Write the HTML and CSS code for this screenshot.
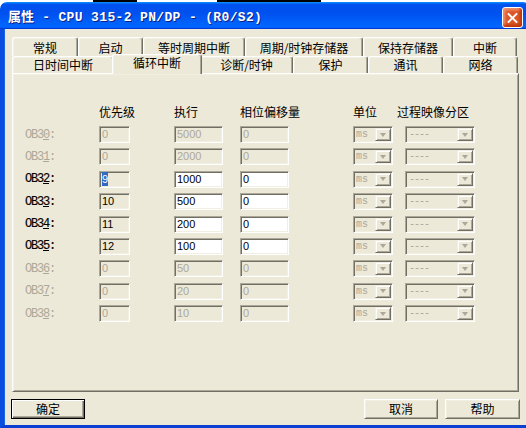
FILE: index.html
```html
<!DOCTYPE html>
<html lang="zh-CN">
<head>
<meta charset="utf-8">
<title>属性 - CPU 315-2 PN/DP - (R0/S2)</title>
<link rel="stylesheet" href="styles.css">
</head>
<body>
<div class="strip"><span class="s1"></span><span class="s2 k"></span><span class="s3"></span><span class="s4 k"></span><span class="s5"></span></div>
<div class="window">
  <div class="titlebar">
    <span class="title"><span class="cjk">属性</span> - CPU 315-2 PN/DP - (R0/S2)</span>
    <div class="closebtn"><span class="x1"></span><span class="x2"></span></div>
  </div>
  <div class="frame">
    <div class="tabs">
      <div class="row row1">
        <div class="tab">常规</div>
        <div class="tab">启动</div>
        <div class="tab">等时周期中断</div>
        <div class="tab">周期/时钟存储器</div>
        <div class="tab">保持存储器</div>
        <div class="tab">中断</div>
      </div>
      <div class="row row2">
        <div class="tab">日时间中断</div>
        <div class="tab sel">循环中断</div>
        <div class="tab">诊断/时钟</div>
        <div class="tab">保护</div>
        <div class="tab">通讯</div>
        <div class="tab">网络</div>
      </div>
    </div>
    <div class="panel">
      <div class="grid head">
        <span></span>
        <span>优先级</span>
        <span>执行</span>
        <span>相位偏移量</span>
        <span>单位</span>
        <span class="parthead">过程映像分区</span>
      </div>
      <div class="rows">
        <div class="grid obrow off">
          <span class="lbl">OB3<u>0</u>:</span>
          <span class="edit p">0</span><span class="edit e">5000</span><span class="edit ph">0</span>
          <span class="combo unit"><span class="txt">ms</span><span class="dd"><i></i></span></span>
          <span class="combo part"><span class="txt">----</span><span class="dd"><i></i></span></span>
        </div>
        <div class="grid obrow off">
          <span class="lbl">OB3<u>1</u>:</span>
          <span class="edit p">0</span><span class="edit e">2000</span><span class="edit ph">0</span>
          <span class="combo unit"><span class="txt">ms</span><span class="dd"><i></i></span></span>
          <span class="combo part"><span class="txt">----</span><span class="dd"><i></i></span></span>
        </div>
        <div class="grid obrow on">
          <span class="lbl">OB3<u>2</u>:</span>
          <span class="edit p"><span class="hl">9</span></span><span class="edit e">1000</span><span class="edit ph">0</span>
          <span class="combo unit"><span class="txt">ms</span><span class="dd"><i></i></span></span>
          <span class="combo part"><span class="txt">----</span><span class="dd"><i></i></span></span>
        </div>
        <div class="grid obrow on">
          <span class="lbl">OB3<u>3</u>:</span>
          <span class="edit p">10</span><span class="edit e">500</span><span class="edit ph">0</span>
          <span class="combo unit"><span class="txt">ms</span><span class="dd"><i></i></span></span>
          <span class="combo part"><span class="txt">----</span><span class="dd"><i></i></span></span>
        </div>
        <div class="grid obrow on">
          <span class="lbl">OB3<u>4</u>:</span>
          <span class="edit p">11</span><span class="edit e">200</span><span class="edit ph">0</span>
          <span class="combo unit"><span class="txt">ms</span><span class="dd"><i></i></span></span>
          <span class="combo part"><span class="txt">----</span><span class="dd"><i></i></span></span>
        </div>
        <div class="grid obrow on">
          <span class="lbl">OB3<u>5</u>:</span>
          <span class="edit p">12</span><span class="edit e">100</span><span class="edit ph">0</span>
          <span class="combo unit"><span class="txt">ms</span><span class="dd"><i></i></span></span>
          <span class="combo part"><span class="txt">----</span><span class="dd"><i></i></span></span>
        </div>
        <div class="grid obrow off">
          <span class="lbl">OB3<u>6</u>:</span>
          <span class="edit p">0</span><span class="edit e">50</span><span class="edit ph">0</span>
          <span class="combo unit"><span class="txt">ms</span><span class="dd"><i></i></span></span>
          <span class="combo part"><span class="txt">----</span><span class="dd"><i></i></span></span>
        </div>
        <div class="grid obrow off">
          <span class="lbl">OB3<u>7</u>:</span>
          <span class="edit p">0</span><span class="edit e">20</span><span class="edit ph">0</span>
          <span class="combo unit"><span class="txt">ms</span><span class="dd"><i></i></span></span>
          <span class="combo part"><span class="txt">----</span><span class="dd"><i></i></span></span>
        </div>
        <div class="grid obrow off">
          <span class="lbl">OB3<u>8</u>:</span>
          <span class="edit p">0</span><span class="edit e">10</span><span class="edit ph">0</span>
          <span class="combo unit"><span class="txt">ms</span><span class="dd"><i></i></span></span>
          <span class="combo part"><span class="txt">----</span><span class="dd"><i></i></span></span>
        </div>
      </div>
    </div>
    <div class="btns">
      <button class="btn default">确定</button>
      <button class="btn push">取消</button>
      <button class="btn">帮助</button>
    </div>
  </div>
</div>
</body>
</html>
```
FILE: styles.css
```css
* { box-sizing: border-box; }
html, body { margin: 0; padding: 0; }
body {
  width: 526px;
  height: 428px;
  overflow: hidden;
  background: #fff;
  font-family: "Noto Sans CJK SC", "Liberation Sans", sans-serif;
  font-size: 12px;
  color: #000;
}

/* desktop strip above the window */
.strip { display: flex; height: 2px; }
.strip span { display: block; height: 2px; background: #fff; }
.strip .k { background: #000; }
.s1 { width: 93px; }
.s2 { width: 44px; }
.s3 { width: 80px; }
.s4 { width: 104px; }
.s5 { flex: 1; }

.window { width: 530px; }

.titlebar {
  height: 27px;
  display: flex;
  align-items: flex-start;
  padding-left: 8px;
  border-radius: 7px 7px 0 0;
  background: linear-gradient(180deg, #0997ff, #0053ee 8%, #0050ee 40%, #0066ff 88%, #0066ff 93%, #005bff 95%, #003dd7 96%, #003dd7);
}
.title {
  margin-top: 5px;
  color: #fff;
  font-family: "Liberation Mono", "Noto Sans CJK SC", monospace;
  font-weight: bold;
  font-size: 13px;
  letter-spacing: 0.35px;
  line-height: 17px;
  white-space: pre;
  text-shadow: 1px 1px 0 #0b1f8c;
}
.title .cjk { font-family: "Noto Sans CJK SC", sans-serif; letter-spacing: 0; }

.closebtn {
  flex: none;
  position: relative;
  width: 21px;
  height: 21px;
  margin-left: auto;
  margin-right: 7px;
  margin-top: 5px;
  border: 1px solid #ffffff;
  border-radius: 3px;
  background: #dd5527;
  box-shadow: inset -2px -2px 3px #b8340c, inset 2px 2px 3px #f19878;
}
.closebtn span {
  position: absolute;
  left: 3px;
  top: 8.5px;
  width: 13px;
  height: 2px;
  background: #ffffff;
}
.closebtn .x1 { transform: rotate(45deg); }
.closebtn .x2 { transform: rotate(-45deg); }

.frame {
  height: 399px;
  background: #ece9d8;
  border-left: 4px solid #0a4ee0;
  border-bottom: 3px solid #0a3fd1;
  box-shadow: inset 1px 0 0 #1d63e8;
  padding: 8px 0 6px 8px;
}

/* tabs */
.tabs { position: relative; z-index: 1; width: 507px; }
.row { display: flex; }
.row1 { height: 19px; }
.row2 { height: 17px; }
.tab {
  flex: none;
  display: flex;
  align-items: center;
  justify-content: center;
  background: #ece9d8;
  border-top: 1px solid #fff;
  border-left: 1px solid #fff;
  border-right: 1px solid #716f64;
  box-shadow: inset -1px 0 0 #aca899, inset 1px 1px 0 #f1efe2;
  border-radius: 3px 3px 0 0;
  line-height: 14px;
  white-space: nowrap;
}
.row1 .tab { padding-top: 2px; }
.row1 .tab:nth-child(1) { width: 66px; }
.row1 .tab:nth-child(2) { width: 65px; }
.row1 .tab:nth-child(3) { width: 102px; }
.row1 .tab:nth-child(4) { width: 118px; }
.row1 .tab:nth-child(5) { width: 90px; }
.row1 .tab:nth-child(6) { width: 64px; }
.row2 .tab:nth-child(1) { width: 102px; }
.row2 .tab:nth-child(2) { width: 86px; }
.row2 .tab:nth-child(3) { width: 93px; }
.row2 .tab:nth-child(4) { width: 75px; }
.row2 .tab:nth-child(5) { width: 75px; }
.row2 .tab:nth-child(6) { width: 75px; }
.row2 .tab.sel {
  position: relative;
  z-index: 2;
  width: 90px;
  height: 20px;
  align-self: flex-start;
  margin: -2px -2px 0 -2px;
  padding-bottom: 3px;
}

/* panel */
.panel {
  width: 507px;
  height: 319px;
  border: 1px solid;
  border-color: #fff #716f64 #716f64 #fff;
  box-shadow: inset 1px 1px 0 #f1efe2, inset -1px -1px 0 #aca899;
  padding: 31px 0 0 12px;
}
.grid {
  display: grid;
  grid-template-columns: 74px 75px 66px 113px 52px 70px;
  align-items: center;
}
.head { height: 14px; line-height: 14px; margin-bottom: 7px; }
.parthead { margin-left: -8px; white-space: nowrap; }
.rows { display: flex; flex-direction: column; gap: 5.4px; }
.obrow { height: 17px; }

.lbl {
  font-family: "Liberation Mono", monospace;
  font-size: 12px;
  letter-spacing: -1.2px;
  line-height: 14px;
  -webkit-text-stroke: 0.15px currentColor;
}
.off .lbl { color: #aca899; -webkit-text-stroke: 0; }

.edit {
  display: block;
  height: 17px;
  border: 1px solid;
  border-color: #aca899 #fff #fff #aca899;
  box-shadow: inset 1px 1px 0 #716f64, inset -1px -1px 0 #f1efe2;
  background: #ece9d8;
  font-family: "Liberation Sans", sans-serif;
  font-size: 11px;
  line-height: 15px;
  padding-left: 2px;
  color: #000;
}
.edit.p { width: 31px; }
.edit.e, .edit.ph { width: 49px; }
.on .edit.e, .on .edit.ph { background: #fff; }
.off .edit { color: #aca899; }
.hl { background: #316ac5; color: #fff; padding: 1px 0 1px 0; }

.combo {
  display: flex;
  align-items: center;
  height: 17px;
  border: 1px solid;
  border-color: #aca899 #fff #fff #aca899;
  box-shadow: inset 1px 1px 0 #716f64, inset -1px -1px 0 #f1efe2;
  background: #ece9d8;
  padding: 1px 1px 1px 2px;
  color: #aca899;
  font-family: "Liberation Mono", monospace;
  font-size: 10px;
  line-height: 13px;
}
.combo.unit { width: 40px; }
.combo.part { width: 70px; }
.combo .txt { flex: 1; }
.combo.part .txt { letter-spacing: -1px; padding-left: 1px; }
.dd {
  width: 16px;
  height: 13px;
  border: 1px solid;
  border-color: #f1efe2 #716f64 #716f64 #f1efe2;
  box-shadow: inset 1px 1px 0 #fff, inset -1px -1px 0 #aca899;
  background: #ece9d8;
  display: flex;
  align-items: center;
  justify-content: center;
}
.dd i {
  display: block;
  width: 0;
  height: 0;
  border-top: 4px solid #aca899;
  border-left: 3.5px solid transparent;
  border-right: 3.5px solid transparent;
}

/* buttons */
.btns {
  display: flex;
  gap: 7px;
  width: 509px;
  height: 20px;
  margin: 7px 0 0 -1px;
}
.btn {
  width: 75px;
  height: 20px;
  padding: 0;
  border: 1px solid;
  border-color: #fff #716f64 #716f64 #fff;
  box-shadow: inset 1px 1px 0 #f1efe2, inset -1px -1px 0 #aca899;
  background: #ece9d8;
  font-family: "Noto Sans CJK SC", sans-serif;
  font-size: 12px;
  line-height: 16px;
  color: #000;
}
.btn.default {
  width: 74px;
  border: 1px solid #000;
  box-shadow: inset 1px 1px 0 #fff, inset -1px -1px 0 #716f64, inset -2px -2px 0 #aca899;
}
.btn.push { margin-left: auto; width: 74px; }
```
